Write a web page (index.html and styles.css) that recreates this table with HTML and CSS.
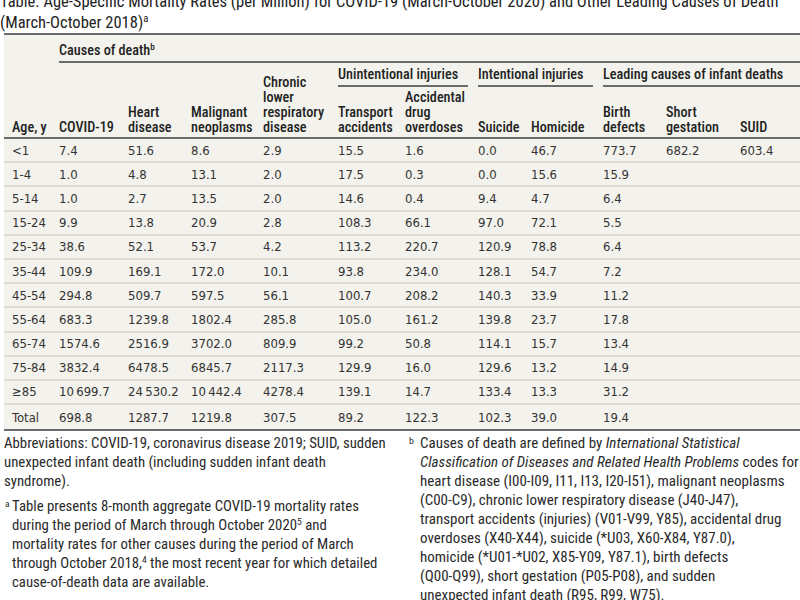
FILE: index.html
```html
<!DOCTYPE html>
<html lang="en">
<head>
<meta charset="utf-8">
<title>Age-Specific Mortality Rates</title>
<link rel="stylesheet" href="styles.css">
</head>
<body>
<h1 class="title"><b>Table.</b> Age-Specific Mortality Rates (per Million) for COVID-19 (March-October 2020) and Other Leading Causes of Death<br>(March-October 2018)<sup>a</sup></h1>

<div class="tbl">
  <div class="thead">
    <div class="th rs3">Age, y</div>
    <div class="th cs11"><span class="grp last">Causes of death<sup>b</sup></span></div>
    <div class="th rs2">COVID-19</div>
    <div class="th rs2">Heart<br>disease</div>
    <div class="th rs2">Malignant<br>neoplasms</div>
    <div class="th rs2">Chronic<br>lower<br>respiratory<br>disease</div>
    <div class="th cs2"><span class="grp">Unintentional injuries</span></div>
    <div class="th cs2"><span class="grp">Intentional injuries</span></div>
    <div class="th cs3"><span class="grp last">Leading causes of infant deaths</span></div>
    <div class="th">Transport<br>accidents</div>
    <div class="th">Accidental<br>drug<br>overdoses</div>
    <div class="th">Suicide</div>
    <div class="th">Homicide</div>
    <div class="th">Birth<br>defects</div>
    <div class="th">Short<br>gestation</div>
    <div class="th">SUID</div>
  </div>
  <div class="tbody">
    <div class="tr"><span>&lt;1</span><span>7.4</span><span>51.6</span><span>8.6</span><span>2.9</span><span>15.5</span><span>1.6</span><span>0.0</span><span>46.7</span><span>773.7</span><span>682.2</span><span>603.4</span></div>
    <div class="tr"><span>1-4</span><span>1.0</span><span>4.8</span><span>13.1</span><span>2.0</span><span>17.5</span><span>0.3</span><span>0.0</span><span>15.6</span><span>15.9</span><span></span><span></span></div>
    <div class="tr"><span>5-14</span><span>1.0</span><span>2.7</span><span>13.5</span><span>2.0</span><span>14.6</span><span>0.4</span><span>9.4</span><span>4.7</span><span>6.4</span><span></span><span></span></div>
    <div class="tr"><span>15-24</span><span>9.9</span><span>13.8</span><span>20.9</span><span>2.8</span><span>108.3</span><span>66.1</span><span>97.0</span><span>72.1</span><span>5.5</span><span></span><span></span></div>
    <div class="tr"><span>25-34</span><span>38.6</span><span>52.1</span><span>53.7</span><span>4.2</span><span>113.2</span><span>220.7</span><span>120.9</span><span>78.8</span><span>6.4</span><span></span><span></span></div>
    <div class="tr"><span>35-44</span><span>109.9</span><span>169.1</span><span>172.0</span><span>10.1</span><span>93.8</span><span>234.0</span><span>128.1</span><span>54.7</span><span>7.2</span><span></span><span></span></div>
    <div class="tr"><span>45-54</span><span>294.8</span><span>509.7</span><span>597.5</span><span>56.1</span><span>100.7</span><span>208.2</span><span>140.3</span><span>33.9</span><span>11.2</span><span></span><span></span></div>
    <div class="tr"><span>55-64</span><span>683.3</span><span>1239.8</span><span>1802.4</span><span>285.8</span><span>105.0</span><span>161.2</span><span>139.8</span><span>23.7</span><span>17.8</span><span></span><span></span></div>
    <div class="tr"><span>65-74</span><span>1574.6</span><span>2516.9</span><span>3702.0</span><span>809.9</span><span>99.2</span><span>50.8</span><span>114.1</span><span>15.7</span><span>13.4</span><span></span><span></span></div>
    <div class="tr"><span>75-84</span><span>3832.4</span><span>6478.5</span><span>6845.7</span><span>2117.3</span><span>129.9</span><span>16.0</span><span>129.6</span><span>13.2</span><span>14.9</span><span></span><span></span></div>
    <div class="tr"><span>≥85</span><span>10&#8201;699.7</span><span>24&#8201;530.2</span><span>10&#8201;442.4</span><span>4278.4</span><span>139.1</span><span>14.7</span><span>133.4</span><span>13.3</span><span>31.2</span><span></span><span></span></div>
    <div class="tr"><span>Total</span><span>698.8</span><span>1287.7</span><span>1219.8</span><span>307.5</span><span>89.2</span><span>122.3</span><span>102.3</span><span>39.0</span><span>19.4</span><span></span><span></span></div>
  </div>
</div>

<div class="notes">
  <div class="col">
    <p>Abbreviations: COVID-19, coronavirus disease 2019; SUID, sudden<br>unexpected infant death (including sudden infant death<br>syndrome).</p>
    <p class="fn fa"><sup class="mk">a</sup>Table presents 8-month aggregate COVID-19 mortality rates<br>during the period of March through October 2020<sup>5</sup> and<br>mortality rates for other causes during the period of March<br>through October 2018,<sup>4</sup> the most recent year for which detailed<br>cause-of-death data are available.</p>
  </div>
  <div class="col">
    <p class="fn fb wide"><sup class="mk">b</sup>Causes of death are defined by <i>International Statistical<br>Classification of Diseases and Related Health Problems</i> codes for<br>heart disease (I00-I09, I11, I13, I20-I51), malignant neoplasms<br>(C00-C9), chronic lower respiratory disease (J40-J47),<br>transport accidents (injuries) (V01-V99, Y85), accidental drug<br>overdoses (X40-X44), suicide (*U03, X60-X84, Y87.0),<br>homicide (*U01-*U02, X85-Y09, Y87.1), birth defects<br>(Q00-Q99), short gestation (P05-P08), and sudden<br>unexpected infant death (R95, R99, W75).</p>
  </div>
</div>
</body>
</html>
```
FILE: styles.css
```css
:root {
  --cols: 47px 69px 63px 72px 75px 67px 73px 53px 72px 63px 74px 68px;
  --ink: #2b2b2b;
  --rule: #6a6a6a;
}
* { box-sizing: border-box; }
html, body { margin: 0; padding: 0; background: #fff; overflow: hidden; }
body { color: var(--ink); font-family: "Roboto", "Liberation Sans", sans-serif; font-stretch: condensed; }

sup { font-size: 65%; line-height: 0; vertical-align: 0.55em; }

.title {
  margin: -9px 0 0 0;
  font-size: 16.5px;
  font-weight: 400;
  line-height: 21px;
  white-space: nowrap;
  color: #222;
}
.title b { font-weight: 400; }

.tbl {
  margin-left: 4px;
  width: 796px;
  background: #f3f2ec;
  border-top: 2px solid var(--rule);
  border-bottom: 2px solid var(--rule);
}

.thead {
  display: grid;
  grid-template-columns: var(--cols);
  grid-template-rows: 28px 24px 50px;
  border-bottom: 2px solid var(--rule);
  font-size: 14.2px;
  font-weight: 500;
  line-height: 15px;
  color: #222;
}
.th {
  align-self: end;
  padding: 0 0 2px 8px;
  white-space: nowrap;
}
.rs3 { grid-row: span 3; }
.rs2 { grid-row: span 2; }
.cs11 { grid-column: span 11; padding: 0; }
.cs2 { grid-column: span 2; padding: 0; }
.cs3 { grid-column: span 3; padding: 0; }
.grp {
  display: block;
  margin: 0 2px 0 8px;
  padding-bottom: 3px;
  border-bottom: 2px solid var(--rule);
}
.grp.last { margin-right: 0; }

.tr {
  display: grid;
  grid-template-columns: var(--cols);
  align-items: center;
  height: 24.2px;
  border-bottom: 2px solid #dcdbd3;
  font-family: "DejaVu Sans Condensed", "DejaVu Sans", sans-serif;
  font-stretch: normal;
  font-size: 13px;
  color: #333;
}
.tr:last-child { border-bottom: 0; }
.tr span { padding-left: 8px; white-space: nowrap; }

.notes {
  display: grid;
  grid-template-columns: 392px 1fr;
  column-gap: 13px;
  margin: 3px 0 0 4px;
  font-size: 14.8px;
  font-stretch: 87.5%;
  line-height: 18.9px;
  color: #2a2a2a;
}
.notes p { margin: 0; white-space: nowrap; }
.notes p + p { margin-top: 6px; }
.notes .wide { font-size: 15px; }
.fn sup.mk { display: inline-block; vertical-align: 0.45em; }
.fa { padding-left: 8px; text-indent: -8px; }
.fa sup.mk { width: 8px; text-indent: 1px; }
.fb { padding-left: 11px; text-indent: -11px; }
.fb sup.mk { width: 11px; text-indent: 0; }
```
